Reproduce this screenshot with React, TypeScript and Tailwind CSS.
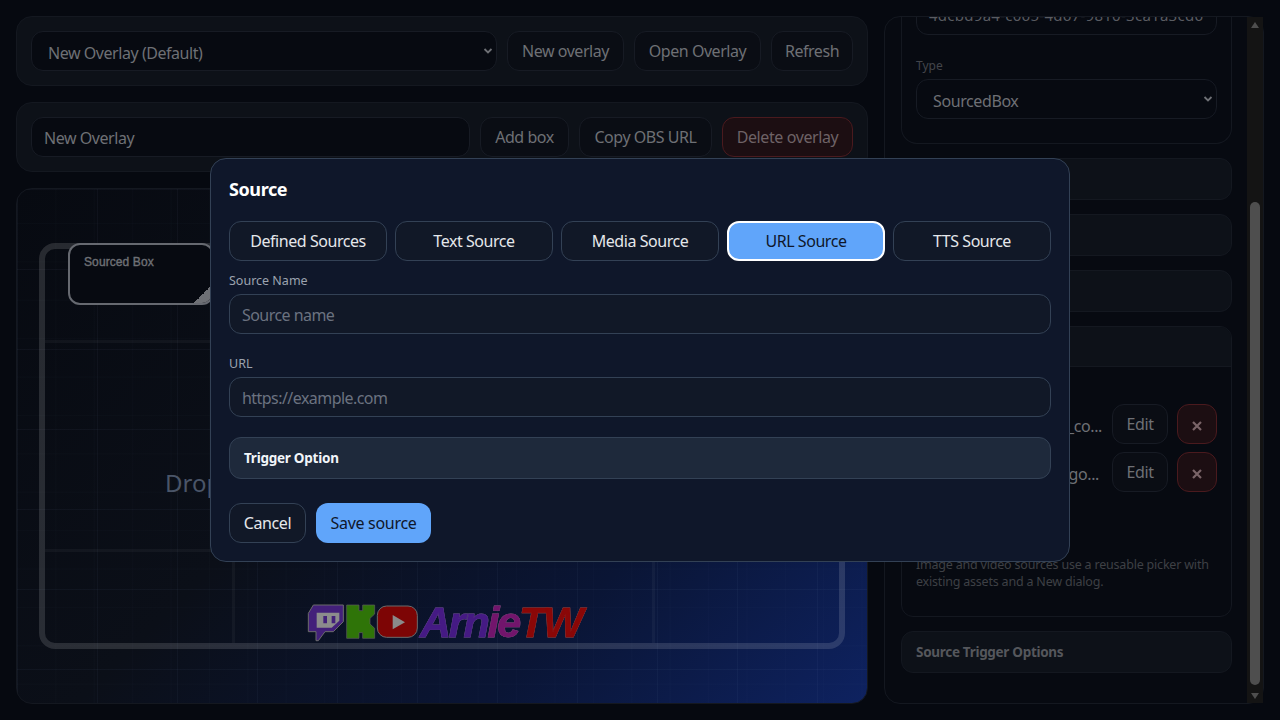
import React from "react";

const font = { fontFamily: '"Noto Sans", sans-serif' };

function DimBtn({ children, w }: { children: React.ReactNode; w: string }) {
  return (
    <button className={`${w} h-10 shrink-0 rounded-xl border border-[#171b24] bg-[#0a0d14] text-[16px] tracking-[-0.45px] text-[#6e7075]`}>
      {children}
    </button>
  );
}

function Chevron() {
  return (
    <svg width="10" height="8" viewBox="0 0 10 8">
      <path d="M1.500 2l3.500 3.500L8.500 2" fill="none" stroke="#6e7075" strokeWidth="1.800" />
    </svg>
  );
}

function Logo() {
  return (
    <div className="absolute left-[273px] top-[401px] h-[60px] w-[310px]">
      <svg width="310" height="60" viewBox="0 0 930 180">
        <path d="M70 45H160V95L130 125H105L85 152H78V125H55V70Z" fill="#43207a" stroke="#6b6b6b" strokeWidth="3" />
        <path d="M80 68H148V92L125 113H80Z" fill="#8c8c8c" />
        <path d="M100 78h11v22h-11zM125 78h11v22h-11z" fill="#43207a" />
        <path d="M170 45H207V62H218V45H254V72L240 85V102L254 115V145H218V128H207V145H170Z" fill="#2f7408" stroke="#5d5d5d" strokeWidth="2" />
        <rect x="262" y="48" width="120" height="94" rx="28" fill="#7d0505" stroke="#6b6b6b" strokeWidth="3" />
        <path d="M308 75L345 97L308 118Z" fill="#8a8a8a" />
      </svg>
      <span
        className="absolute left-[130px] top-[5px] whitespace-nowrap text-[43px] font-bold italic leading-[54px] tracking-[-2.200px] [-webkit-text-stroke:0.8px_currentColor] [filter:drop-shadow(0_0_0.6px_#8a8a8a)]"
        style={{ fontFamily: '"Liberation Sans", sans-serif' }}
      >
        <span className="text-[#451a84]">Arn</span>
        <span className="text-[#72156c]">ie</span>
        <span className="text-[#8a0707]">TW</span>
      </span>
    </div>
  );
}

function LeftColumn() {
  return (
    <div className="flex w-[852px] shrink-0 flex-col gap-4">
      <div className="flex h-[70px] items-center gap-[10px] rounded-2xl border border-[#141820] bg-[#0d1118] px-[14px]">
        <div className="flex h-10 flex-1 items-center justify-between rounded-xl border border-[#171b24] bg-[#070a11] pl-[16px] pr-[3px] text-[16px] tracking-[-0.45px] text-[#6e7075]">
          <span className="pt-[3px]">New Overlay (Default)</span>
          <Chevron />
        </div>
        <DimBtn w="w-[117px]">New overlay</DimBtn>
        <DimBtn w="w-[127px]">Open Overlay</DimBtn>
        <DimBtn w="w-[82px]">Refresh</DimBtn>
      </div>
      <div className="flex h-[70px] items-center gap-[10px] rounded-2xl border border-[#141820] bg-[#0d1118] px-[14px]">
        <div className="flex h-10 flex-1 items-center rounded-xl border border-[#171b24] bg-[#070a11] pl-[12px] pt-[2px] text-[16px] tracking-[-0.45px] text-[#6e7075]">New Overlay</div>
        <DimBtn w="w-[89px]">Add box</DimBtn>
        <DimBtn w="w-[133px]">Copy OBS URL</DimBtn>
        <button className="h-10 w-[131px] rounded-xl border border-[#4a1a1e] bg-[#1c0e12] text-[16px] tracking-[-0.4px] text-[#6e6266]">Delete overlay</button>
      </div>
      <div className="relative h-[516px] overflow-hidden rounded-2xl border border-[#141820] bg-[linear-gradient(135deg,#070a11_0%,#0b0f18_42%,#0a1535_72%,#0e2260_100%)]">
        <div className="absolute inset-0 bg-[linear-gradient(rgba(140,160,200,0.05)_1px,transparent_1px),linear-gradient(90deg,rgba(140,160,200,0.05)_1px,transparent_1px),linear-gradient(rgba(140,160,200,0.02)_1px,transparent_1px),linear-gradient(90deg,rgba(140,160,200,0.02)_1px,transparent_1px)] bg-[size:80px_80px,80px_80px,38.400px_38.400px,38.400px_38.400px] bg-[position:0_0,0_0,0_34px,0_0]" />
        <div className="absolute left-[22px] top-[54px] h-[406px] w-[806px] overflow-hidden rounded-2xl border-[6px] border-[rgba(255,255,255,0.13)]">
          <div className="absolute inset-x-0 top-[91px] h-[3px] bg-[rgba(255,255,255,0.04)]" />
          <div className="absolute inset-x-0 top-[300px] h-[3px] bg-[rgba(255,255,255,0.04)]" />
          <div className="absolute bottom-0 left-[187px] top-[300px] w-[3px] bg-[rgba(255,255,255,0.04)]" />
          <div className="absolute bottom-0 left-[607px] top-[300px] w-[3px] bg-[rgba(255,255,255,0.04)]" />
        </div>
        <div className="absolute left-[148px] top-[276px] text-[24px] text-[#4a5568]">Drop</div>
        <div className="absolute left-[51px] top-[54px] h-[62px] w-[146px] overflow-hidden rounded-xl border-2 border-[#666970] bg-[#070a11]">
          <span
            className="absolute left-[14px] top-[8px] text-[12px] tracking-[0.1px] text-[#6e7075] [-webkit-text-stroke:0.4px_#6e7075]"
            style={{ fontFamily: '"Liberation Sans", sans-serif' }}
          >
            Sourced Box
          </span>
          <div className="absolute bottom-0 right-0 h-[18px] w-[18px] bg-[linear-gradient(135deg,transparent_50%,#6e7075_50%)]" />
        </div>
        <Logo />
      </div>
    </div>
  );
}

function Edit() {
  return <button className="h-10 w-[56px] shrink-0 rounded-xl border border-[#171b24] bg-[#0a0d14] text-[#6e7075]">Edit</button>;
}

function X() {
  return (
    <button className="flex h-10 w-10 shrink-0 items-center justify-center rounded-xl border border-[#4a1a1e] bg-[#1c0e12] pt-[3px]">
      <svg width="10" height="10" viewBox="0 0 10 10">
        <path d="M1 1l8 8M9 1l-8 8" stroke="#7a6468" strokeWidth="2.200" />
      </svg>
    </button>
  );
}

function RightColumn() {
  return (
    <div className="relative h-[688px] w-[380px] shrink-0 rounded-2xl border border-[#141820] bg-[#070a11]">
      <div className="h-full overflow-hidden rounded-2xl">
        <div className="flex h-full flex-col gap-[14px] pb-4 pl-4 pr-[31px]">
          <div className="h-[127px] shrink-0 rounded-b-2xl border border-t-0 border-[#141820] px-[14px]">
            <div className="-mt-[22px] flex h-10 items-center overflow-hidden rounded-xl border border-[#171b24] px-3 text-[15px] tracking-[0.27px] text-[#5a5c62]">
              <span className="whitespace-nowrap">4dcbd9a4-c065-4d67-9810-3ca1a3cd6</span>
            </div>
            <div className="mt-[22px] text-[12px] leading-[18px] text-[#43454b]">Type</div>
            <div className="mt-[4px] flex h-10 items-center justify-between rounded-xl border border-[#171b24] bg-[#070a11] pl-4 pr-[3px] text-[16px] tracking-[-0.4px] text-[#6e7075]">
              <span className="pt-[3px]">SourcedBox</span>
              <Chevron />
            </div>
          </div>
          <div className="h-[42px] shrink-0 rounded-xl border border-[#141820] bg-[#0d1118]" />
          <div className="h-[42px] shrink-0 rounded-xl border border-[#141820] bg-[#0d1118]" />
          <div className="h-[42px] shrink-0 rounded-xl border border-[#141820] bg-[#0d1118]" />
          <div className="h-[291px] shrink-0 overflow-hidden rounded-xl border border-[#141820]">
            <div className="h-[40px] border-b border-[#141820] bg-[#0d1118]" />
            <div className="flex h-[250px] flex-col px-[14px]">
              <div className="mt-[37px] flex h-10 items-center justify-end gap-[9px] text-[16px] tracking-[-0.4px] text-[#6e7075]">
                <span className="pr-[1px] pt-[3px]">_co...</span>
                <Edit />
                <X />
              </div>
              <div className="mt-2 flex h-10 items-center justify-end gap-[9px] text-[16px] tracking-[-0.4px] text-[#6e7075]">
                <span className="pr-[4px] pt-[3px]">go...</span>
                <Edit />
                <X />
              </div>
              <p className="mt-[64px] text-[12.500px] leading-[17px] tracking-[-0.2px] text-[#3e4045]">
                Image and video sources use a reusable picker with existing assets and a New dialog.
              </p>
            </div>
          </div>
          <div className="flex h-[42px] shrink-0 items-center rounded-xl border border-[#141820] bg-[#0d1118] px-[14px] text-[13.500px] font-bold tracking-[-0.3px] text-[#55575c]">
            Source Trigger Options
          </div>
        </div>
      </div>
      <div className="absolute bottom-0 right-0 top-0 w-4 bg-[#141414]">
        <svg className="absolute left-[3px] top-[4px]" width="10" height="8" viewBox="0 0 10 8"><path d="M5 1l4 6H1z" fill="#4e4e4e" /></svg>
        <div className="absolute left-[3px] top-[185px] h-[483px] w-[10px] rounded-full bg-[#4e4e4e]" />
        <svg className="absolute bottom-[3px] left-[3px]" width="10" height="8" viewBox="0 0 10 8"><path d="M5 7l4-6H1z" fill="#4e4e4e" /></svg>
      </div>
    </div>
  );
}

function Tab({ children, active }: { children: React.ReactNode; active?: boolean }) {
  return active ? (
    <button className="h-10 w-[158px] rounded-xl border-2 border-white bg-[#60a5fa] text-[16px] tracking-[-0.45px] text-[#0f172a]">{children}</button>
  ) : (
    <button className="h-10 w-[158px] rounded-xl border border-[#334155] bg-[#111827] text-[16px] tracking-[-0.45px] text-[#e5e7eb]">{children}</button>
  );
}

function Field({ label, placeholder }: { label: string; placeholder: string }) {
  return (
    <div>
      <div className="text-[12.500px] leading-[17px] text-[#9ca3af]">{label}</div>
      <input
        readOnly
        placeholder={placeholder}
        className="mt-[5px] h-10 w-full rounded-xl border border-[#334155] bg-[#111827] px-3 pt-[1px] text-[16px] tracking-[-0.55px] outline-none placeholder:text-[#6b7280]"
      />
    </div>
  );
}

function Modal() {
  return (
    <div className="fixed inset-0 flex items-center justify-center">
      <div className="h-[404px] w-[860px] rounded-2xl border border-[#334155] bg-[#0f172a] px-[18px] pt-[18px]">
        <h2 className="text-[18px] font-bold leading-[25px] tracking-[-0.4px] text-white">Source</h2>
        <div className="mt-[19px] flex gap-2">
          <Tab>Defined Sources</Tab>
          <Tab>Text Source</Tab>
          <Tab>Media Source</Tab>
          <Tab active>URL Source</Tab>
          <Tab>TTS Source</Tab>
        </div>
        <div className="mt-[11px] flex flex-col gap-[21px]">
          <Field label="Source Name" placeholder="Source name" />
          <Field label="URL" placeholder="https://example.com" />
        </div>
        <div className="mt-[20px] flex h-[42px] items-center rounded-xl border border-[#334155] bg-[#1e293b] px-[14px] text-[13.500px] font-bold tracking-[-0.25px] text-[#f1f5f9]">
          Trigger Option
        </div>
        <div className="mt-[24px] flex gap-[10px]">
          <button className="h-10 w-[77px] rounded-xl border border-[#334155] bg-[#111827] text-[16px] tracking-[-0.4px] text-[#e5e7eb]">Cancel</button>
          <button className="h-10 w-[115px] rounded-xl bg-[#60a5fa] text-[16px] tracking-[-0.3px] text-[#0f172a]">Save source</button>
        </div>
      </div>
    </div>
  );
}

export default function App() {
  return (
    <div className="h-[720px] w-[1280px] overflow-hidden bg-[#060910]" style={font}>
      <div className="flex gap-4 p-4">
        <LeftColumn />
        <RightColumn />
      </div>
      <Modal />
    </div>
  );
}
